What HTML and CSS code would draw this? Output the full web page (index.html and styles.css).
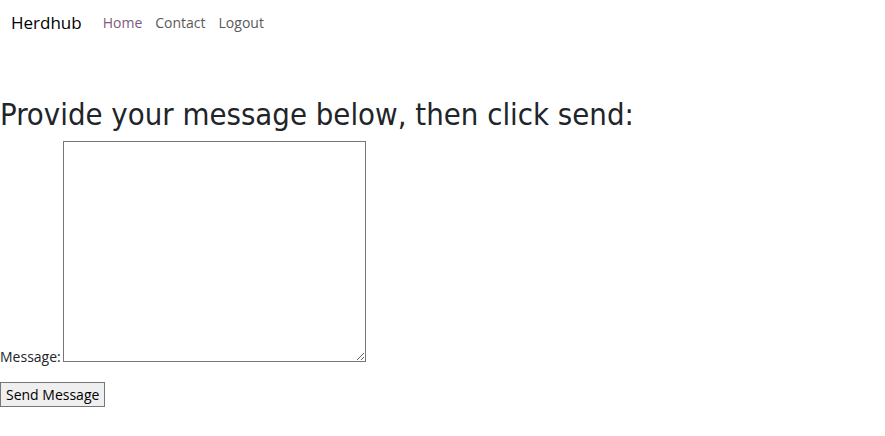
FILE: index.html
```html
<!DOCTYPE html>
<html>
<head>
<meta charset="utf-8">
<link rel="stylesheet" href="styles.css">
</head>
<body>
<nav class="navbar">
  <a class="brand" href="#">Herdhub</a>
  <ul class="nav">
    <li><a class="nav-link visited" href="#">Home</a></li>
    <li><a class="nav-link" href="#">Contact</a></li>
    <li><a class="nav-link" href="#">Logout</a></li>
  </ul>
</nav>
<main class="content">
  <h2 class="title">Provide your message below, then click send:</h2>
  <form class="form">
    <div class="field">
      <label class="label" for="msg">Message:</label><textarea id="msg" class="msg"></textarea>
    </div>
    <button type="button" class="send">Send Message</button>
  </form>
</main>
</body>
</html>
```
FILE: styles.css
```css
html, body {
  margin: 0;
  padding: 0;
  background: #fff;
  font-family: "Open Sans", "Noto Sans", sans-serif;
  color: #212529;
}
.navbar {
  display: flex;
  align-items: center;
  padding: 7px 11px 9px;
  height: 30px;
}
.brand {
  font-size: 17px;
  color: #000;
  text-decoration: none;
  margin-right: 21px;
}
.nav {
  display: flex;
  list-style: none;
  margin: 0;
  padding: 0;
  gap: 13px;
}
.nav-link {
  font-size: 14px;
  color: #5a5a5a;
  text-decoration: none;
}
.nav-link.visited {
  color: #7b5b7b;
}
.content {
  padding-top: 41px;
}
.title {
  font-family: "DejaVu Sans Condensed", "DejaVu Sans", sans-serif;
  font-weight: normal;
  font-size: 30.8px;
  line-height: 54px;
  margin: 0;
}
.label {
  font-size: 14px;
  color: #212529;
}
.msg {
  width: 297px;
  height: 215px;
  border: 1px solid #767676;
  padding: 2px;
  margin: 0 0 0 2px;
  vertical-align: baseline;
  resize: both;
}
.send {
  margin-top: 15px;
  font-family: "Open Sans", sans-serif;
  font-size: 14px;
  line-height: 19px;
  padding: 2px 5px;
  background: #efefef;
  border: 1px solid #767676;
  border-radius: 0;
  color: #000;
}
```
